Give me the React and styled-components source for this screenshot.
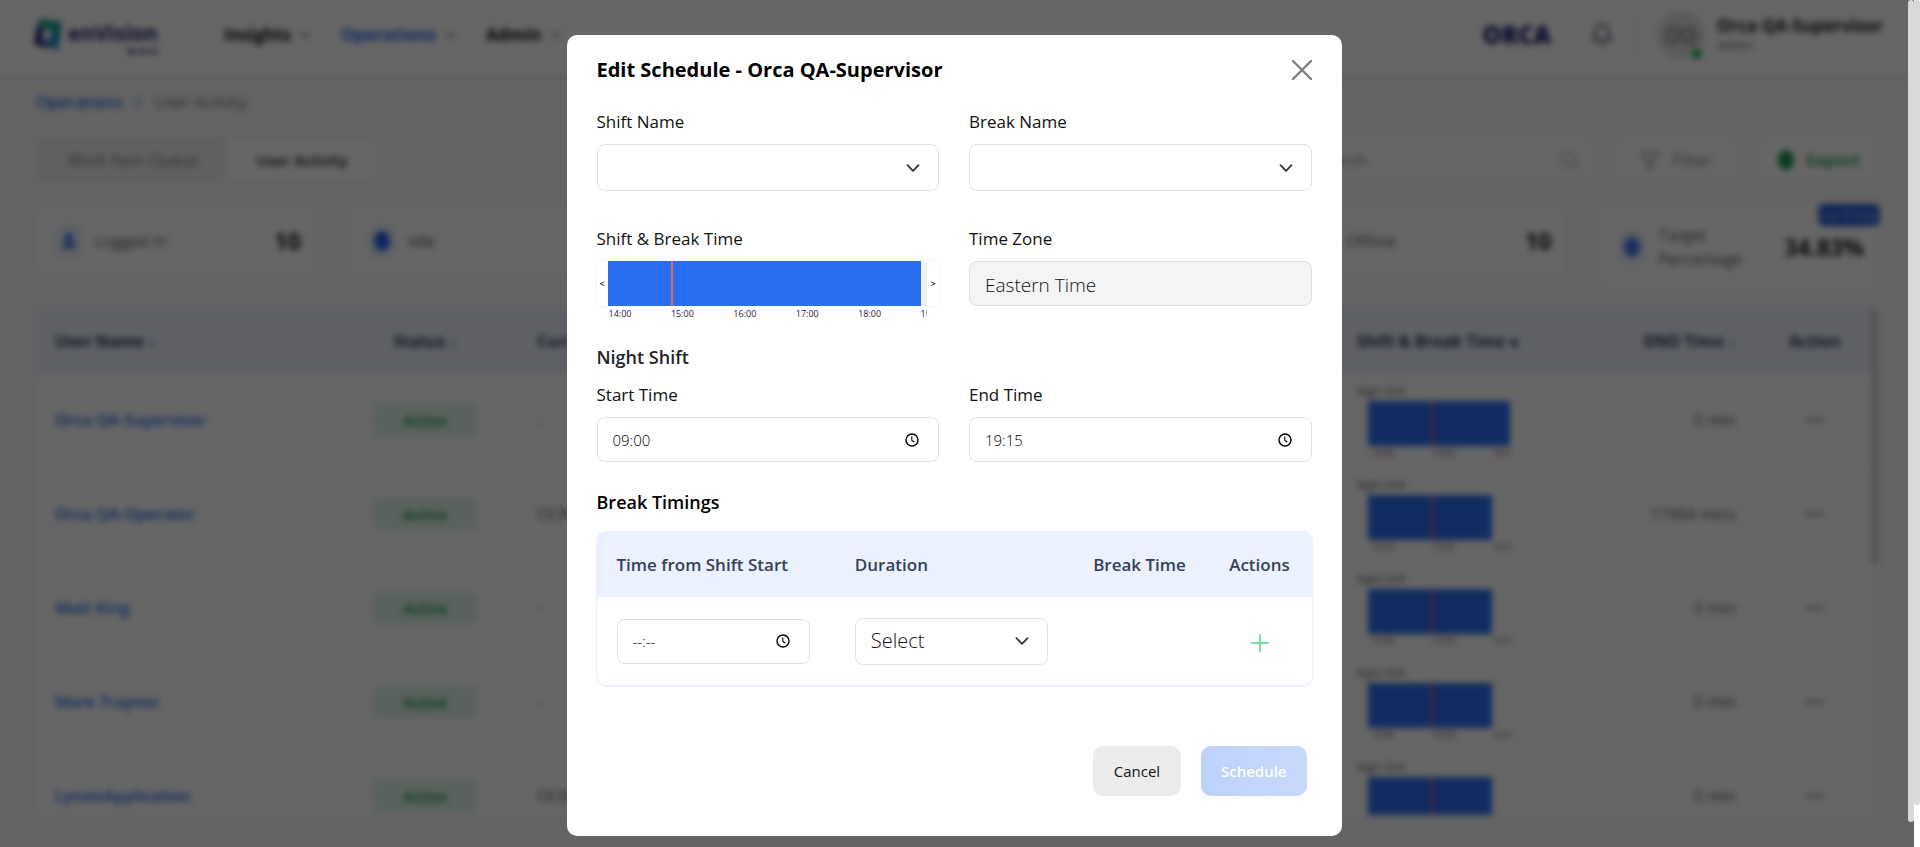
import React, { useState } from "react";
import styled, { createGlobalStyle } from "styled-components";
import { Bell, ChevronDown, ChevronRight, Filter, Search, User } from "lucide-react";

const GlobalStyle = createGlobalStyle`
  *, *::before, *::after { box-sizing: border-box; }
  html, body, #root { height: 100%; }
  body {
    margin: 0;
    overflow: hidden;
    background: #ffffff;
    color: #212529;
    font-family: "Open Sans", "Noto Sans", sans-serif;
    font-size: 16px;
    line-height: 24px;
  }
  button, input, select { font: inherit; color: inherit; }
  button { cursor: pointer; }
  h1, h2, p { margin: 0; }
`;

/* ---------- page behind the dialog ---------- */

const Page = styled.div`
  height: 100%;
  margin-right: 12px;
  background: #f9f9f9;
  display: flex;
  flex-direction: column;
  overflow: hidden;
`;

const TopBar = styled.header`
  flex: none;
  height: 75px;
  padding: 0 25px 6px 34px;
  display: flex;
  align-items: center;
  background: #ffffff;
  box-shadow: 0 2px 4px rgba(0, 0, 0, 0.08);
`;

const Brand = styled.a`
  width: 190px;
  display: flex;
  align-items: center;
  gap: 4px;
  text-decoration: none;
`;

const BrandName = styled.span`
  margin-top: 8px;
  display: flex;
  flex-direction: column;
  align-items: flex-end;
  color: #26237a;
  font-size: 21px;
  font-weight: 700;
  line-height: 24px;

  small {
    font-size: 8px;
    line-height: 12px;
  }
`;

const Nav = styled.nav`
  flex: 1;
  display: flex;
  gap: 28px;
`;

const NavLink = styled.a`
  display: flex;
  align-items: center;
  gap: 6px;
  color: ${(p) => (p.$active ? "#2a6ff2" : "#111111")};
  font-size: 17px;
  font-weight: 700;
  text-decoration: none;

  svg { color: #555555; }
`;

const Account = styled.div`
  display: flex;
  align-items: center;
`;

const OrcaMark = styled.span`
  padding-right: 18px;
  color: #1c1a78;
  font-size: 24px;
  font-weight: 800;
`;

const BellButton = styled.button`
  width: 66px;
  height: 50px;
  display: grid;
  place-items: center;
  border: solid #eeeeee;
  border-width: 0 1px;
  background: none;
  color: #3d4663;
`;

const Avatar = styled.span`
  position: relative;
  width: 48px;
  height: 48px;
  margin: 0 12px 0 22px;
  display: grid;
  place-items: center;
  border-radius: 50%;
  background: #e2e2e2;
  color: #555555;
  font-size: 20px;

  &::after {
    content: "";
    position: absolute;
    right: 3px;
    bottom: 0;
    width: 10px;
    height: 10px;
    border-radius: 50%;
    background: #18b455;
  }
`;

const Person = styled.div`
  color: #222222;
  font-size: 17px;
  font-weight: 700;
  line-height: 22px;

  small {
    display: block;
    color: #777777;
    font-size: 12px;
    font-weight: 400;
    line-height: 18px;
  }
`;

const Main = styled.main`
  flex: 1;
  min-height: 0;
  padding: 15px 30px 32px 36px;
  display: flex;
  flex-direction: column;
`;

const Crumbs = styled.nav`
  display: flex;
  align-items: center;
  gap: 8px;
  color: #777777;

  a {
    color: #2a6ff2;
    font-weight: 600;
    text-decoration: none;
  }
  svg { color: #2a6ff2; }
`;

const Tools = styled.div`
  margin-top: 23px;
  display: flex;
  justify-content: space-between;
`;

const Tabs = styled.div`
  height: 45px;
  padding: 2px;
  display: flex;
  border-radius: 6px;
  border: 1px solid #eeeeee;
  background: linear-gradient(to right, #f0f0f5 55%, #ffffff 55%);
`;

const Tab = styled.button`
  width: ${(p) => (p.$active ? 150 : 188)}px;
  border: 0;
  border-radius: 6px;
  background: ${(p) => (p.$active ? "#ffffff" : "none")};
  color: ${(p) => (p.$active ? "#222222" : "#888888")};
  font-size: ${(p) => (p.$active ? 15 : 16)}px;
  font-weight: ${(p) => (p.$active ? 600 : 400)};
`;

const ToolGroup = styled.div`
  display: flex;
  gap: 25px;
`;

const SearchBox = styled.label`
  width: 290px;
  height: 45px;
  padding: 0 12px 0 12px;
  display: flex;
  align-items: center;
  border-radius: 6px;
  background: #ffffff;
  color: #aaaaaa;

  input {
    flex: 1;
    min-width: 0;
    border: 0;
    background: none;
  }
  input::placeholder { color: #888888; }
`;

const ToolButton = styled.button`
  width: 118px;
  height: 45px;
  display: flex;
  align-items: center;
  justify-content: center;
  gap: 12px;
  border: 0;
  border-radius: 6px;
  background: #ffffff;
  color: ${(p) => (p.$green ? "#149947" : "#888888")};
  font-size: 17px;
  font-weight: ${(p) => (p.$green ? 600 : 400)};
`;

const Dot = styled.span`
  width: 16px;
  height: 20px;
  border-radius: 50%;
  background: ${(p) => p.$color || "#149947"};
`;

const Cards = styled.div`
  height: 79px;
  margin-top: 24px;
  display: grid;
  grid-template-columns: repeat(6, minmax(0, 1fr));
  gap: 34px;
  align-items: start;
`;

const Card = styled.section`
  grid-column: ${(p) => p.$column};
  height: ${(p) => (p.$tall ? 81 : 69)}px;
  padding: 0 14px 0 20px;
  position: relative;
  display: flex;
  align-items: center;
  gap: 13px;
  border-radius: 6px;
  background: #ffffff;
  color: #666666;

  strong {
    margin-left: auto;
    color: #222222;
    font-size: 23px;
  }
`;

const CardIcon = styled.span`
  width: 26px;
  height: 32px;
  display: grid;
  place-items: center;
  border-radius: 6px;
  background: #e8eefc;
`;

const Flag = styled.span`
  position: absolute;
  top: -2px;
  right: -2px;
  width: 62px;
  border-radius: 6px;
  background: #2a63d6;
  color: #a9c2f7;
  font-size: 10px;
  line-height: 22px;
  text-align: center;
`;

const TableFrame = styled.div`
  flex: 1;
  min-height: 0;
  margin-top: 23px;
  overflow: hidden;
  display: flex;
  border-radius: 6px;
  background: #ffffff;
`;

const Grip = styled.div`
  width: 7px;
  height: 257px;
  margin-left: -4px;
  border-radius: 4px;
  background: #d0d0d0;
`;

const UsersTable = styled.table`
  flex: 1;
  width: 100%;
  table-layout: fixed;
  border-collapse: collapse;

  th, td {
    padding: 0 19px;
    text-align: left;
    font-weight: 400;
  }
  thead th {
    height: 65px;
    background: #ebf1fe;
    color: #2e3a52;
    font-weight: 700;
  }
  tbody tr { height: 94px; border-bottom: 1px solid #fafafa; }
  th:nth-child(1) { width: 300px; }
  th:nth-child(2) { width: 178px; }
  th:nth-child(4) { width: 200px; }
  th:nth-child(5) { width: 217px; }
  th:nth-child(6) { width: 120px; }
  th:nth-child(2), td:nth-child(2), th:nth-child(6), td:nth-child(6) { text-align: center; }
  th:nth-child(3), td:nth-child(3) { padding-left: 23px; }
  th:nth-child(5), td:nth-child(5) { text-align: right; }
  td:nth-child(n + 3) { color: #666666; }
`;

const UserLink = styled.a`
  color: #2a6ff2;
  font-weight: 600;
  text-decoration: none;
`;

const Status = styled.span`
  display: inline-block;
  width: 104px;
  border-radius: 6px;
  background: #def5e7;
  color: #149947;
  font-size: 15px;
  font-weight: 600;
  line-height: 32px;
`;

const MiniShift = styled.div`
  padding-top: 1px;
  color: #555555;
  font-size: 10px;
  line-height: 20px;
`;

const MiniBar = styled.div`
  width: ${(p) => (p.$long ? 142 : 124)}px;
  height: 45px;
  margin-left: 11px;
  padding-left: 62px;
  background: #2a6ff2;

  &::before {
    content: "";
    display: block;
    width: 2px;
    height: 100%;
    background: #f0645c;
  }
`;

const MiniTicks = styled.div`
  min-height: 14px;
  padding-left: 14px;
  display: flex;
  gap: 38px;
  font-size: 9px;
  line-height: 14px;
`;

/* ---------- scroll bars ---------- */

const ScrollRail = styled.div`
  position: fixed;
  z-index: 3;
  top: 0;
  right: 0;
  bottom: 0;
  width: 12px;
  display: flex;
`;

const ScrollTrack = styled.div`
  width: 6px;
  background: ${(p) => p.$track};

  &::before {
    content: "";
    display: block;
    height: ${(p) => p.$size}%;
    border-radius: 3px;
    background: #d9d9d9;
  }
`;

/* ---------- dialog ---------- */

const Overlay = styled.div`
  position: fixed;
  z-index: 2;
  inset: 0;
  padding: 35px 12px 11px 0;
  display: flex;
  justify-content: center;
  align-items: flex-start;
  background: rgba(0, 0, 0, 0.6);
  backdrop-filter: blur(3px);
`;

const Dialog = styled.form`
  width: 100%;
  max-width: 775px;
  padding: 20px 30px 40px;
  border-radius: 10px;
  background: #ffffff;
`;

const DialogHead = styled.header`
  height: 30px;
  display: flex;
  align-items: center;
  justify-content: space-between;
`;

const Title = styled.h1`
  color: #000000;
  font-size: 20px;
  font-weight: 700;
  line-height: 30px;
`;

const CloseButton = styled.button`
  padding: 0;
  display: flex;
  border: 0;
  background: none;
  color: #7f7f7f;
`;

const FieldGrid = styled.div`
  margin-top: ${(p) => p.$gap}px;
  display: grid;
  grid-template-columns: 1fr 1fr;
  gap: 30px;
`;

const Field = styled.div`
  min-width: 0;
  display: flex;
  flex-direction: column;
  gap: 10px;
  color: #212529;
`;

const FieldLabel = styled.label`
  color: #111111;
  font-size: 17px;
  font-weight: 400;
`;

const SelectShell = styled.div`
  display: grid;
  align-items: center;
  color: #343a40;

  > * { grid-area: 1 / 1; }
  svg { margin-right: 18px; justify-self: end; pointer-events: none; }
`;

const Select = styled.select`
  width: 100%;
  height: 47px;
  padding: 0 40px 0 15px;
  appearance: none;
  border: 1px solid #dee2e6;
  border-radius: 8px;
  background: #ffffff;
  color: #111111;
  font-size: 20px;
  font-weight: 300;
`;

const ReadOnlyInput = styled.input`
  width: 100%;
  height: 45px;
  padding: 2px 15px 0;
  border: 1px solid #dcdde6;
  border-radius: 8px;
  background: #f4f4f5;
  color: #111111;
  font-size: 19px;
  font-weight: 300;
`;

const TimeBox = styled.div`
  height: 45px;
  padding: 0 18px 0 15px;
  display: flex;
  align-items: center;
  border: 1px solid #dfdfe8;
  border-radius: 8px;
  background: #ffffff;

  input {
    flex: 1;
    min-width: 0;
    padding: 0;
    border: 0;
    background: none;
    color: #000000;
    font-size: 15px;
    font-weight: 300;
  }
  button {
    padding: 0;
    display: flex;
    border: 0;
    background: none;
    color: #000000;
  }
`;

const SectionTitle = styled.h2`
  margin-top: ${(p) => p.$gap}px;
  color: ${(p) => p.$color};
  font-size: 18px;
  font-weight: 600;
  line-height: 24px;
`;

const Timeline = styled.div`
  display: grid;
  grid-template-columns: 11px minmax(0, 1fr) 12px;
`;

const StepButton = styled.button`
  height: 45px;
  padding: 0;
  border: 0;
  background: #ffffff;
  box-shadow: 0 0 4px rgba(0, 0, 0, 0.08);
  color: #000000;
  font-size: 9px;
  font-weight: 600;
`;

const Track = styled.div`
  overflow: hidden;
  background: linear-gradient(#f4f4f4, #f4f4f4) top / 100% 45px no-repeat;
`;

const ShiftBar = styled.div`
  width: 98%;
  height: 45px;
  padding-left: 63px;
  background: #2a6ff2;

  &::before {
    content: "";
    display: block;
    width: 2px;
    height: 100%;
    background: #f0645c;
  }
`;

const Ticks = styled.div`
  padding-left: 1px;
  display: grid;
  grid-auto-flow: column;
  grid-auto-columns: 19.6%;
  font-size: 9px;
  line-height: 16px;
`;

const BreakFrame = styled.div`
  margin: 17px -1px 0;
  border: 1px solid #ebf1fe;
  border-bottom-width: 2px;
  border-radius: 10px;
  overflow: hidden;
`;

const BreakTable = styled.table`
  width: 100%;
  table-layout: fixed;
  border-collapse: collapse;

  th, td {
    padding: 0 25px 0 20px;
    text-align: left;
  }
  th {
    height: 65px;
    background: #ebf1fe;
    color: #343f58;
    font-size: 17px;
    font-weight: 600;
  }
  td { height: 88px; }
  th:nth-child(-n + 2) { width: 33.3333%; }
  th:nth-child(3) { padding-right: 0; }
  th:nth-child(4) { width: 104px; }
  th:nth-child(4), td:nth-child(4) { padding: 0; text-align: center; }
`;

const AddButton = styled.button`
  padding: 0;
  display: inline-flex;
  vertical-align: middle;
  border: 0;
  background: none;
  color: #74e0a4;
`;

const Footer = styled.footer`
  margin-top: 59px;
  padding-right: 5px;
  display: flex;
  justify-content: flex-end;
  gap: 20px;
`;

const ActionButton = styled.button`
  min-width: 88px;
  height: 50px;
  padding: 0 20px;
  border: 0;
  border-radius: 10px;
  background: ${(p) => (p.$primary ? "linear-gradient(to right, #bdd2fb, #c8dafc)" : "#ececec")};
  color: ${(p) => (p.$primary ? "#ffffff" : "#111111")};
  font-size: 15px;
  font-weight: ${(p) => (p.$primary ? 600 : 500)};
`;

const users = [
  { name: "Orca QA-Supervisor", item: "-", dnd: "0 min", long: true, ticks: true },
  { name: "Orca QA-Operator", item: "OCR", dnd: "11904 mins", ticks: true },
  { name: "Matt King", item: "-", dnd: "0 min", ticks: true },
  { name: "Mark Traynor", item: "-", dnd: "0 min", ticks: true },
  { name: "LynxisApplication", item: "OCR", dnd: "0 min" },
];

const Chevron = () => (
  <svg width="16" height="16" viewBox="0 0 16 16" fill="none" aria-hidden="true">
    <path d="M2.5 5.2l5.5 5.6 5.5-5.6" stroke="currentColor" strokeWidth="1.9" strokeLinecap="round" strokeLinejoin="round" />
  </svg>
);

const ClockIcon = () => (
  <svg width="16" height="16" viewBox="0 0 16 16" fill="none" stroke="currentColor" aria-hidden="true">
    <circle cx="8" cy="8" r="6" strokeWidth="1.4" />
    <path d="M7.8 4.5v3.8l2.5 1.9" strokeWidth="1.1" />
  </svg>
);

function TimeInput({ id, label, initial = "" }) {
  const [value, setValue] = useState(initial);
  return (
    <TimeBox>
      <input id={id} aria-label={label} value={value} onChange={(e) => setValue(e.target.value)} />
      <button type="button" aria-label="Pick a time"><ClockIcon /></button>
    </TimeBox>
  );
}

function DropDown({ id, label, children }) {
  return (
    <SelectShell>
      <Select id={id} aria-label={label}>{children}</Select>
      <Chevron />
    </SelectShell>
  );
}

function Background() {
  return (
    <Page>
      <TopBar>
        <Brand href="#">
          <svg width="30" height="34" viewBox="0 0 30 34" aria-hidden="true">
            <path d="M5 1l23 3-4 29-11-6 5-14-14-5z" fill="#1592b4" />
            <path d="M5 1l12 2 10 1-6 9-17-5z" fill="#16a58a" />
            <path d="M3 8l7 3-2 11 8 3-3 5-13-4z" fill="#26237a" />
          </svg>
          <BrandName>enVision<small>by Orca</small></BrandName>
        </Brand>
        <Nav>
          <NavLink href="#">Insights <ChevronDown size={16} /></NavLink>
          <NavLink href="#" $active>Operations <ChevronDown size={16} /></NavLink>
          <NavLink href="#">Admin <ChevronDown size={16} /></NavLink>
        </Nav>
        <Account>
          <OrcaMark>ORCA</OrcaMark>
          <BellButton aria-label="Notifications"><Bell size={24} /></BellButton>
          <Avatar>OQ</Avatar>
          <Person>Orca QA-Supervisor<small>Admin</small></Person>
        </Account>
      </TopBar>
      <Main>
        <Crumbs>
          <a href="#">Operations</a>
          <ChevronRight size={16} />
          <span>User Activity</span>
        </Crumbs>
        <Tools>
          <Tabs>
            <Tab>Work Item Queue</Tab>
            <Tab $active>User Activity</Tab>
          </Tabs>
          <ToolGroup>
            <SearchBox>
              <input aria-label="Search" placeholder="Search" />
              <Search size={20} />
            </SearchBox>
            <ToolButton><Filter size={20} />Filter</ToolButton>
            <ToolButton $green><Dot />Export</ToolButton>
          </ToolGroup>
        </Tools>
        <Cards>
          <Card $column={1}><CardIcon><User size={18} color="#1f63ee" fill="#1f63ee" /></CardIcon>Logged In<strong>10</strong></Card>
          <Card $column={2}><CardIcon><Dot $color="#1f63ee" /></CardIcon>Idle</Card>
          <Card $column={5}><CardIcon />Offline<strong>10</strong></Card>
          <Card $column={6} $tall>
            <CardIcon><Dot $color="#3f7af0" /></CardIcon>
            <span>Target<br />Percentage</span>
            <strong>34.83%</strong>
            <Flag>Last 30 Days</Flag>
          </Card>
        </Cards>
        <TableFrame>
          <UsersTable>
            <thead>
              <tr>
                <th>User Name ↓</th>
                <th>Status ↓</th>
                <th>Current</th>
                <th>Shift &amp; Break Time ●</th>
                <th>DND Time ↓</th>
                <th>Action</th>
              </tr>
            </thead>
            <tbody>
              {users.map((u) => (
                <tr key={u.name}>
                  <td><UserLink href="#">{u.name}</UserLink></td>
                  <td><Status>Active</Status></td>
                  <td>{u.item}</td>
                  <td>
                    <MiniShift>
                      Night Shift
                      <MiniBar $long={u.long} />
                      <MiniTicks>
                        {u.ticks && <><span>14:00</span><span>15:00</span><span>16:0</span></>}
                      </MiniTicks>
                    </MiniShift>
                  </td>
                  <td>{u.dnd}</td>
                  <td>•••</td>
                </tr>
              ))}
            </tbody>
          </UsersTable>
          <Grip />
        </TableFrame>
      </Main>
    </Page>
  );
}

function ScheduleDialog() {
  return (
    <Overlay>
      <Dialog role="dialog" aria-modal="true" aria-labelledby="dialog-title" onSubmit={(e) => e.preventDefault()}>
        <DialogHead>
          <Title id="dialog-title">Edit Schedule - Orca QA-Supervisor</Title>
          <CloseButton type="button" aria-label="Close">
            <svg width="20" height="20" viewBox="0 0 20 20" aria-hidden="true">
              <path d="M1 1l18 18M19 1L1 19" stroke="currentColor" strokeWidth="2.4" strokeLinecap="round" />
            </svg>
          </CloseButton>
        </DialogHead>

        <FieldGrid $gap={25}>
          <Field>
            <FieldLabel htmlFor="shift-name">Shift Name</FieldLabel>
            <DropDown id="shift-name"><option value="" /></DropDown>
          </Field>
          <Field>
            <FieldLabel htmlFor="break-name">Break Name</FieldLabel>
            <DropDown id="break-name"><option value="" /></DropDown>
          </Field>
        </FieldGrid>

        <FieldGrid $gap={36}>
          <Field>
            <FieldLabel as="span">Shift &amp; Break Time</FieldLabel>
            <Timeline>
              <StepButton type="button" aria-label="Earlier">&lt;</StepButton>
              <Track>
                <ShiftBar />
                <Ticks>
                  {[14, 15, 16, 17, 18, 19].map((h) => <span key={h}>{h}:00</span>)}
                </Ticks>
              </Track>
              <StepButton type="button" aria-label="Later">&gt;</StepButton>
            </Timeline>
          </Field>
          <Field>
            <FieldLabel htmlFor="time-zone">Time Zone</FieldLabel>
            <ReadOnlyInput id="time-zone" value="Eastern Time" readOnly />
          </Field>
        </FieldGrid>

        <SectionTitle $gap={23} $color="#212529">Night Shift</SectionTitle>
        <FieldGrid $gap={14}>
          <Field>
            <FieldLabel htmlFor="start-time">Start Time</FieldLabel>
            <TimeInput id="start-time" initial="09:00" />
          </Field>
          <Field>
            <FieldLabel htmlFor="end-time">End Time</FieldLabel>
            <TimeInput id="end-time" initial="19:15" />
          </Field>
        </FieldGrid>

        <SectionTitle $gap={28} $color="#000000">Break Timings</SectionTitle>
        <BreakFrame>
          <BreakTable>
            <thead>
              <tr>
                <th>Time from Shift Start</th>
                <th>Duration</th>
                <th>Break Time</th>
                <th>Actions</th>
              </tr>
            </thead>
            <tbody>
              <tr>
                <td><TimeInput label="Time from shift start" initial="--:--" /></td>
                <td><DropDown label="Duration"><option>Select</option></DropDown></td>
                <td />
                <td>
                  <AddButton type="button" aria-label="Add break">
                    <svg width="18" height="18" viewBox="0 0 18 18" aria-hidden="true">
                      <path d="M9 1v16M1 9h16" stroke="currentColor" strokeWidth="2" strokeLinecap="round" />
                    </svg>
                  </AddButton>
                </td>
              </tr>
            </tbody>
          </BreakTable>
        </BreakFrame>

        <Footer>
          <ActionButton type="button">Cancel</ActionButton>
          <ActionButton type="submit" $primary>Schedule</ActionButton>
        </Footer>
      </Dialog>
    </Overlay>
  );
}

export default function App() {
  return (
    <>
      <GlobalStyle />
      <Background />
      <ScheduleDialog />
      <ScrollRail aria-hidden="true">
        <ScrollTrack $size={97} $track="#656565" />
        <ScrollTrack $size={95} $track="#ffffff" />
      </ScrollRail>
    </>
  );
}
